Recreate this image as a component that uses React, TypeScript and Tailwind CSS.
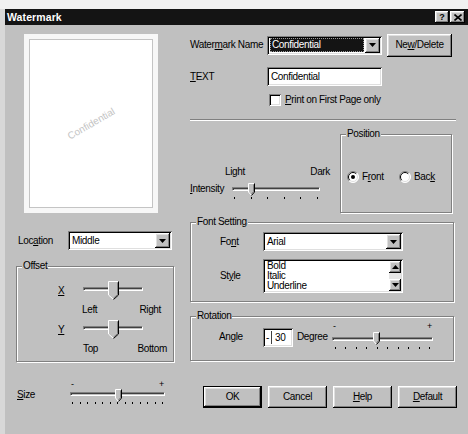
import React from "react";

const sunken =
  "shadow-[inset_1px_1px_0_#808080,inset_-1px_-1px_0_#ffffff,inset_2px_2px_0_#000000,inset_-2px_-2px_0_#dfdfdf]";
const raised =
  "bg-[#c0c0c0] shadow-[inset_-1px_-1px_0_#000000,inset_1px_1px_0_#ffffff,inset_-2px_-2px_0_#808080,inset_2px_2px_0_#dfdfdf]";

function U({ children }: { children: React.ReactNode }) {
  return <u className="underline underline-offset-[1px] decoration-1">{children}</u>;
}

function DownArrow() {
  return (
    <svg width="7" height="4" viewBox="0 0 7 4">
      <path d="M0 0H7L3.5 4Z" fill="#000" />
    </svg>
  );
}
function UpArrow() {
  return (
    <svg width="7" height="4" viewBox="0 0 7 4">
      <path d="M0 4H7L3.5 0Z" fill="#000" />
    </svg>
  );
}

function DropBtn() {
  return (
    <div className={`w-[15px] h-[15px] shrink-0 ${raised} flex items-center justify-center`}>
      <DownArrow />
    </div>
  );
}

function Combo({ w, children }: { w: string; children: React.ReactNode }) {
  return (
    <div className={`${w} h-[19px] shrink-0 bg-white ${sunken} flex p-[2px]`}>
      <div className="flex-1 flex items-center pl-[2px] overflow-hidden whitespace-nowrap">{children}</div>
      <DropBtn />
    </div>
  );
}

function Group({
  label,
  className,
  children,
}: {
  label: string;
  className: string;
  children?: React.ReactNode;
}) {
  return (
    <div
      className={`relative shrink-0 border border-[#808080] shadow-[inset_1px_1px_0_#ffffff,1px_1px_0_#ffffff] ${className}`}
    >
      <span className="absolute -top-[7px] left-[5px] bg-[#c0c0c0] px-[1px] leading-[12px]">{label}</span>
      {children}
    </div>
  );
}

function SmallThumb() {
  return (
    <svg width="7" height="13" viewBox="0 0 7 13">
      <path d="M0.5 0.5H6.5V9L3.5 12.5L0.5 9Z" fill="#c0c0c0" />
      <path d="M0.5 9V0.5H6" stroke="#ffffff" fill="none" />
      <path d="M0.5 9L3.5 12.5" stroke="#ffffff" fill="none" />
      <path d="M6.5 0.5V9L3.5 12.5" stroke="#000000" fill="none" />
      <path d="M5.5 1.5V8.6L3.5 11" stroke="#808080" fill="none" />
    </svg>
  );
}

function BigThumb() {
  return (
    <svg width="11" height="19" viewBox="0 0 11 19">
      <path d="M0.5 0.5H10.5V14L5.5 18.5L0.5 14Z" fill="#c0c0c0" />
      <path d="M0.5 14V0.5H10" stroke="#ffffff" fill="none" />
      <path d="M0.5 14L5.5 18.5" stroke="#ffffff" fill="none" />
      <path d="M10.5 0.5V14L5.5 18.5" stroke="#000000" fill="none" />
      <path d="M9.5 1.5V13.6L5.5 17.2" stroke="#808080" fill="none" />
    </svg>
  );
}

function Slider({
  box,
  track,
  thumb,
  big,
  ticks,
  tickRow,
  signs,
}: {
  box: string;
  track: string;
  thumb: string;
  big?: boolean;
  ticks: number;
  tickRow?: string;
  signs?: boolean;
}) {
  return (
    <div className={`relative shrink-0 ${box}`}>
      {signs && (
        <div className="flex justify-between px-[1px] h-[8px] text-[9px] leading-[8px]">
          <span>-</span>
          <span>+</span>
        </div>
      )}
      <div
        className={`h-[4px] border border-[#808080] border-b-white border-r-white shadow-[inset_1px_1px_0_#404040] ${track}`}
      />
      {ticks > 0 && (
        <div className={`flex justify-between ${tickRow}`}>
          {Array.from({ length: ticks }).map((_, i) => (
            <div key={i} className="w-[1px] h-[2px] bg-black" />
          ))}
        </div>
      )}
      <div className={`absolute ${thumb} leading-[0]`}>{big ? <BigThumb /> : <SmallThumb />}</div>
    </div>
  );
}

function Radio({ checked }: { checked?: boolean }) {
  return (
    <svg width="12" height="12" viewBox="0 0 12 12" className="shrink-0">
      <circle cx="6" cy="6" r="5.5" fill="#ffffff" />
      <path d="M2.1 9.9A5.5 5.5 0 0 1 9.9 2.1" stroke="#808080" fill="none" />
      <path d="M9.9 2.1A5.5 5.5 0 0 1 2.1 9.9" stroke="#ffffff" fill="none" />
      <path d="M2.8 9.2A4.5 4.5 0 0 1 9.2 2.8" stroke="#000000" fill="none" />
      <path d="M9.2 2.8A4.5 4.5 0 0 1 2.8 9.2" stroke="#dfdfdf" fill="none" />
      {checked && <circle cx="6" cy="6" r="2" fill="#000000" />}
    </svg>
  );
}

function Btn({ children, def }: { children: React.ReactNode; def?: boolean }) {
  return (
    <div
      className={`w-[59px] h-[22px] shrink-0 ${raised} ${def ? "border border-black" : ""} flex items-center justify-center`}
    >
      {children}
    </div>
  );
}

export default function App() {
  return (
    <div className="w-[468px] h-[434px] bg-[#f0f0f0] flex flex-col overflow-hidden font-['Liberation_Sans',Arial,sans-serif] text-[10px] leading-[12px] tracking-[-0.35px] text-black">
      <div className="h-[9px] shrink-0" />
      <div className="flex-1 flex bg-[#d8d8d8] pl-[5px]">
        <div className="flex-1 flex flex-col bg-[#c0c0c0]">
          {/* title bar */}
          <div className="h-[16px] shrink-0 bg-[#141414] flex items-center pl-[2px] pr-[3px]">
            <span className="text-white font-bold text-[10.5px] tracking-[0.1px]">Watermark</span>
            <div className="flex-1" />
            <div className={`w-[14px] h-[12px] ${raised} flex items-center justify-center font-bold text-[9px] leading-[9px] tracking-normal`}>
              ?
            </div>
            <div className={`ml-[1px] w-[15px] h-[12px] ${raised} flex items-center justify-center`}>
              <svg width="8" height="7" viewBox="0 0 8 7">
                <path d="M0.5 0.5L7.5 6.5M7.5 0.5L0.5 6.5" stroke="#000" strokeWidth="1.6" />
              </svg>
            </div>
          </div>

          {/* body */}
          <div className="flex pl-[11px]">
            {/* left column */}
            <div className="w-[158px] shrink-0 flex flex-col">
              <div className="ml-[8px] mt-[9px] w-[134px] h-[179px] bg-[#f7f7f7] p-[5px]">
                <div className="w-full h-full border border-[#c4c4c4] bg-white flex items-center justify-center">
                  <span className="rotate-[-30deg] text-[10px] text-[#c4c4c4] tracking-normal">Confidential</span>
                </div>
              </div>

              <div className="mt-[18px] h-[19px] flex items-center">
                <div className="w-[52px] pl-[2px]">
                  Loc<U>a</U>tion
                </div>
                <Combo w="w-[104px]">Middle</Combo>
              </div>

              <Group label="Offset" className="mt-[16px] w-[158px] h-[96px] flex flex-col pt-[14px]">
                <div className="h-[19px] flex items-start">
                  <div className="ml-[41px] w-[25px] mt-[4px]">
                    <U>X</U>
                  </div>
                  <Slider box="w-[60px] h-[19px]" track="mt-[6px]" thumb="left-[25px] top-0" big ticks={0} />
                </div>
                <div className="mt-[4px] ml-[65px] w-[79px] flex justify-between">
                  <span>Left</span>
                  <span>Right</span>
                </div>
                <div className="mt-[4px] h-[19px] flex items-start">
                  <div className="ml-[41px] w-[25px] mt-[4px]">
                    <U>Y</U>
                  </div>
                  <Slider box="w-[60px] h-[19px]" track="mt-[6px]" thumb="left-[25px] top-0" big ticks={0} />
                </div>
                <div className="mt-[4px] ml-[66px] w-[84px] flex justify-between">
                  <span>Top</span>
                  <span>Bottom</span>
                </div>
              </Group>

              <div className="mt-[18px] flex items-start">
                <div className="w-[54px] pl-[1px] mt-[9px]">
                  <U>S</U>ize
                </div>
                <Slider
                  box="w-[95px] h-[25px]"
                  signs
                  track="mt-[4px]"
                  thumb="left-[45px] top-[9px]"
                  ticks={13}
                  tickRow="mt-[6px] px-[2px]"
                />
              </div>
            </div>

            {/* right column */}
            <div className="ml-[16px] w-[267px] shrink-0 flex flex-col">
              <div className="mt-[8px] h-[24px] flex items-center">
                <div className="w-[77px]">
                  Water<U>m</U>ark Name
                </div>
                <div className={`w-[115px] h-[19px] shrink-0 bg-white ${sunken} flex p-[2px]`}>
                  <div className="flex-1 flex items-center pl-[1px] pr-[1px]">
                    <div className="w-full h-[14px] bg-[#141414] border border-dotted border-[#9a9a9a] text-white pl-[1px] flex items-center">
                      Confidential
                    </div>
                  </div>
                  <DropBtn />
                </div>
                <div className={`ml-[5px] w-[65px] h-[23px] shrink-0 ${raised} flex items-center justify-center`}>
                  Ne<U>w</U>/Delete
                </div>
              </div>

              <div className="mt-[10px] h-[19px] flex items-center">
                <div className="w-[77px]">
                  <U>T</U>EXT
                </div>
                <div className={`w-[115px] h-[19px] bg-white ${sunken} flex items-center pl-[4px]`}>Confidential</div>
              </div>

              <div className="mt-[8px] h-[12px] flex items-center pl-[79px]">
                <div className={`w-[12px] h-[12px] bg-white ${sunken}`} />
                <span className="ml-[4px]">
                  <U>P</U>rint on First Page only
                </span>
              </div>

              <div className="mt-[13px] w-[266px] h-[2px] border-t border-t-[#808080] border-b border-b-white" />

              <div className="flex items-start">
                <div className="w-[150px] shrink-0 flex flex-col pt-[45px]">
                  <div className="ml-[35px] w-[105px] flex justify-between">
                    <span>Light</span>
                    <span>Dark</span>
                  </div>
                  <div className="mt-[5px] flex items-start">
                    <div className="w-[42px]">
                      <U>I</U>ntensity
                    </div>
                    <Slider
                      box="w-[88px] h-[17px]"
                      track="mt-[4px]"
                      thumb="left-[16px] top-0"
                      ticks={6}
                      tickRow="mt-[6px] px-[2px]"
                    />
                  </div>
                </div>
                <Group label="Position" className="mt-[13px] w-[112px] h-[79px] pt-[36px] pl-[6px]">
                  <div className="flex items-center">
                    <div className="w-[52px] flex items-center gap-[3px]">
                      <Radio checked />
                      <span>
                        F<U>r</U>ont
                      </span>
                    </div>
                    <div className="flex items-center gap-[3px]">
                      <Radio />
                      <span>
                        Bac<U>k</U>
                      </span>
                    </div>
                  </div>
                </Group>
              </div>

              <Group label="Font Setting" className="mt-[9px] w-[264px] h-[80px] pt-[9px]">
                <div className="h-[19px] flex items-center">
                  <div className="w-[72px] pl-[29px]">
                    Fo<U>n</U>t
                  </div>
                  <Combo w="w-[140px]">Arial</Combo>
                </div>
                <div className="mt-[8px] h-[34px] flex items-center">
                  <div className="w-[72px] pl-[29px]">
                    St<U>y</U>le
                  </div>
                  <div className={`w-[140px] h-[34px] bg-white ${sunken} p-[2px] flex`}>
                    <div className="flex-1 overflow-hidden pl-[2px] leading-[10px]">
                      <div>Bold</div>
                      <div>Italic</div>
                      <div>Underline</div>
                    </div>
                    <div className="w-[12px] flex flex-col bg-[#e6e6e6]">
                      <div className={`h-[12px] ${raised} flex items-center justify-center`}>
                        <UpArrow />
                      </div>
                      <div className="flex-1" />
                      <div className={`h-[12px] ${raised} flex items-center justify-center`}>
                        <DownArrow />
                      </div>
                    </div>
                  </div>
                </div>
              </Group>

              <Group label="Rotation" className="mt-[14px] w-[264px] h-[45px] pt-[5px] flex items-start">
                <div className="w-[72px] pl-[28px] mt-[9px]">Angle</div>
                <div className={`mt-[6px] w-[30px] h-[19px] shrink-0 bg-white ${sunken} flex items-center pl-[3px]`}>
                  <span className="w-[5px]">-</span>
                  <div className="w-[1px] h-[13px] bg-[#404040]" />
                  <span className="pl-[3px]">30</span>
                </div>
                <div className="ml-[4px] w-[35px] mt-[9px]">Degree</div>
                <Slider
                  box="w-[101px] h-[28px]"
                  signs
                  track="mt-[7px]"
                  thumb="left-[41px] top-[10px]"
                  ticks={10}
                  tickRow="mt-[6px] px-[3px]"
                />
              </Group>

              <div className="mt-[25px] pl-[13px] flex gap-[6px]">
                <Btn def>OK</Btn>
                <Btn>Cancel</Btn>
                <Btn>
                  <U>H</U>elp
                </Btn>
                <Btn>
                  <U>D</U>efault
                </Btn>
              </div>
            </div>
          </div>
        </div>
      </div>
    </div>
  );
}
